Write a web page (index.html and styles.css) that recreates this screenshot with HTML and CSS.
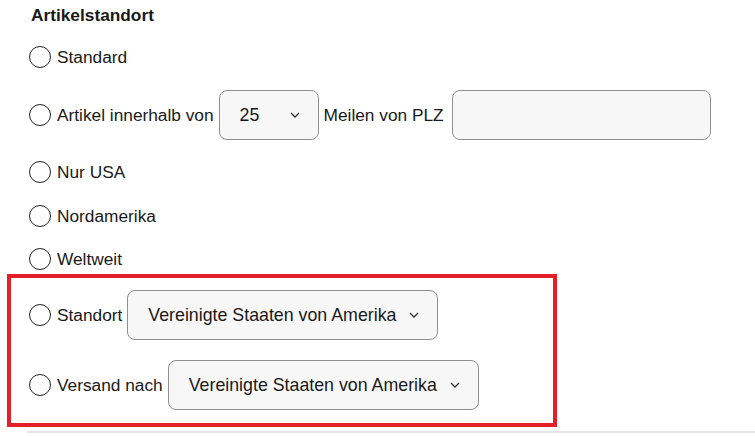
FILE: index.html
```html
<!DOCTYPE html>
<html>
<head>
    <title>Artikelstandort</title>
    <link rel="stylesheet" href="styles.css">
</head>
<body>
    <div class="filter">
        <h3 class="filter-title">Artikelstandort</h3>
        <div class="options">
            <label class="option">
                <input type="radio" name="location">
                <span>Standard</span>
            </label>
            <div class="option">
                <input type="radio" name="location">
                <span>Artikel innerhalb von</span>
                <div class="select select-small">
                    <select>
                        <option>25</option>
                        <option>50</option>
                        <option>100</option>
                    </select>
                    <svg class="chevron" width="10" height="6" viewBox="0 0 10 6"><path d="M1 1l4 4 4-4" fill="none" stroke="#333" stroke-width="1.3"/></svg>
                </div>
                <span>Meilen von PLZ</span>
                <input type="text" class="zip">
            </div>
            <label class="option">
                <input type="radio" name="location">
                <span>Nur USA</span>
            </label>
            <label class="option">
                <input type="radio" name="location">
                <span>Nordamerika</span>
            </label>
            <label class="option">
                <input type="radio" name="location">
                <span>Weltweit</span>
            </label>

            <!-- markierter Bereich -->
            <div class="highlight">
                <div class="option">
                    <input type="radio" name="location">
                    <span>Standort</span>
                    <div class="select select-country">
                        <select>
                            <option>Vereinigte Staaten von Amerika</option>
                        </select>
                        <svg class="chevron" width="10" height="6" viewBox="0 0 10 6"><path d="M1 1l4 4 4-4" fill="none" stroke="#333" stroke-width="1.3"/></svg>
                    </div>
                </div>
                <div class="option">
                    <input type="radio" name="location">
                    <span>Versand nach</span>
                    <div class="select select-country">
                        <select>
                            <option>Vereinigte Staaten von Amerika</option>
                        </select>
                        <svg class="chevron" width="10" height="6" viewBox="0 0 10 6"><path d="M1 1l4 4 4-4" fill="none" stroke="#333" stroke-width="1.3"/></svg>
                    </div>
                </div>
            </div>
        </div>
    </div>
    <div class="divider"></div>
</body>
</html>
```

FILE: styles.css
```css
body {
    margin: 0;
    background-color: white;
    color: #191919;
    font-family: "Liberation Sans", Arial, sans-serif;
    font-size: 17.3px;
}

.filter {
    padding: 5px 0 0 29px;
}

.filter-title {
    margin: 0 0 21px 2px;
    font-size: 17.3px;
    font-weight: bold;
    line-height: 20px;
}

.options {
    display: flex;
    flex-direction: column;
    gap: 21.5px;
}

.option {
    display: flex;
    align-items: center;
    gap: 5px;
    line-height: 22px;
}

input[type="radio"] {
    appearance: none;
    width: 22px;
    height: 22px;
    margin: 0 1px 0 0;
    border: 1.5px solid #222;
    border-radius: 50%;
    background-color: white;
    flex-shrink: 0;
}

.select {
    position: relative;
    height: 50px;
}

.select select {
    appearance: none;
    width: 100%;
    height: 100%;
    padding: 0 0 0 20px;
    border: 1px solid #8f8f8f;
    border-radius: 8px;
    background-color: #f7f7f7;
    color: #191919;
    font-family: inherit;
    font-size: 17.8px;
}

.chevron {
    position: absolute;
    top: 22px;
    right: 19px;
}

.select-small {
    width: 100px;
}

.select-country {
    width: 311px;
}

.zip {
    width: 259px;
    height: 50px;
    box-sizing: border-box;
    margin-left: 3px;
    border: 1px solid #8f8f8f;
    border-radius: 8px;
    background-color: #f7f7f7;
}

.highlight {
    display: flex;
    flex-direction: column;
    gap: 20px;
    margin: -17.5px 0 0 -22px;
    padding: 12px 0 13px 18px;
    width: 524px;
    border: 4px solid #e41f27;
}

.divider {
    margin: 4px 0 0 27px;
    border-top: 2px solid #e5e5e5;
}
```
